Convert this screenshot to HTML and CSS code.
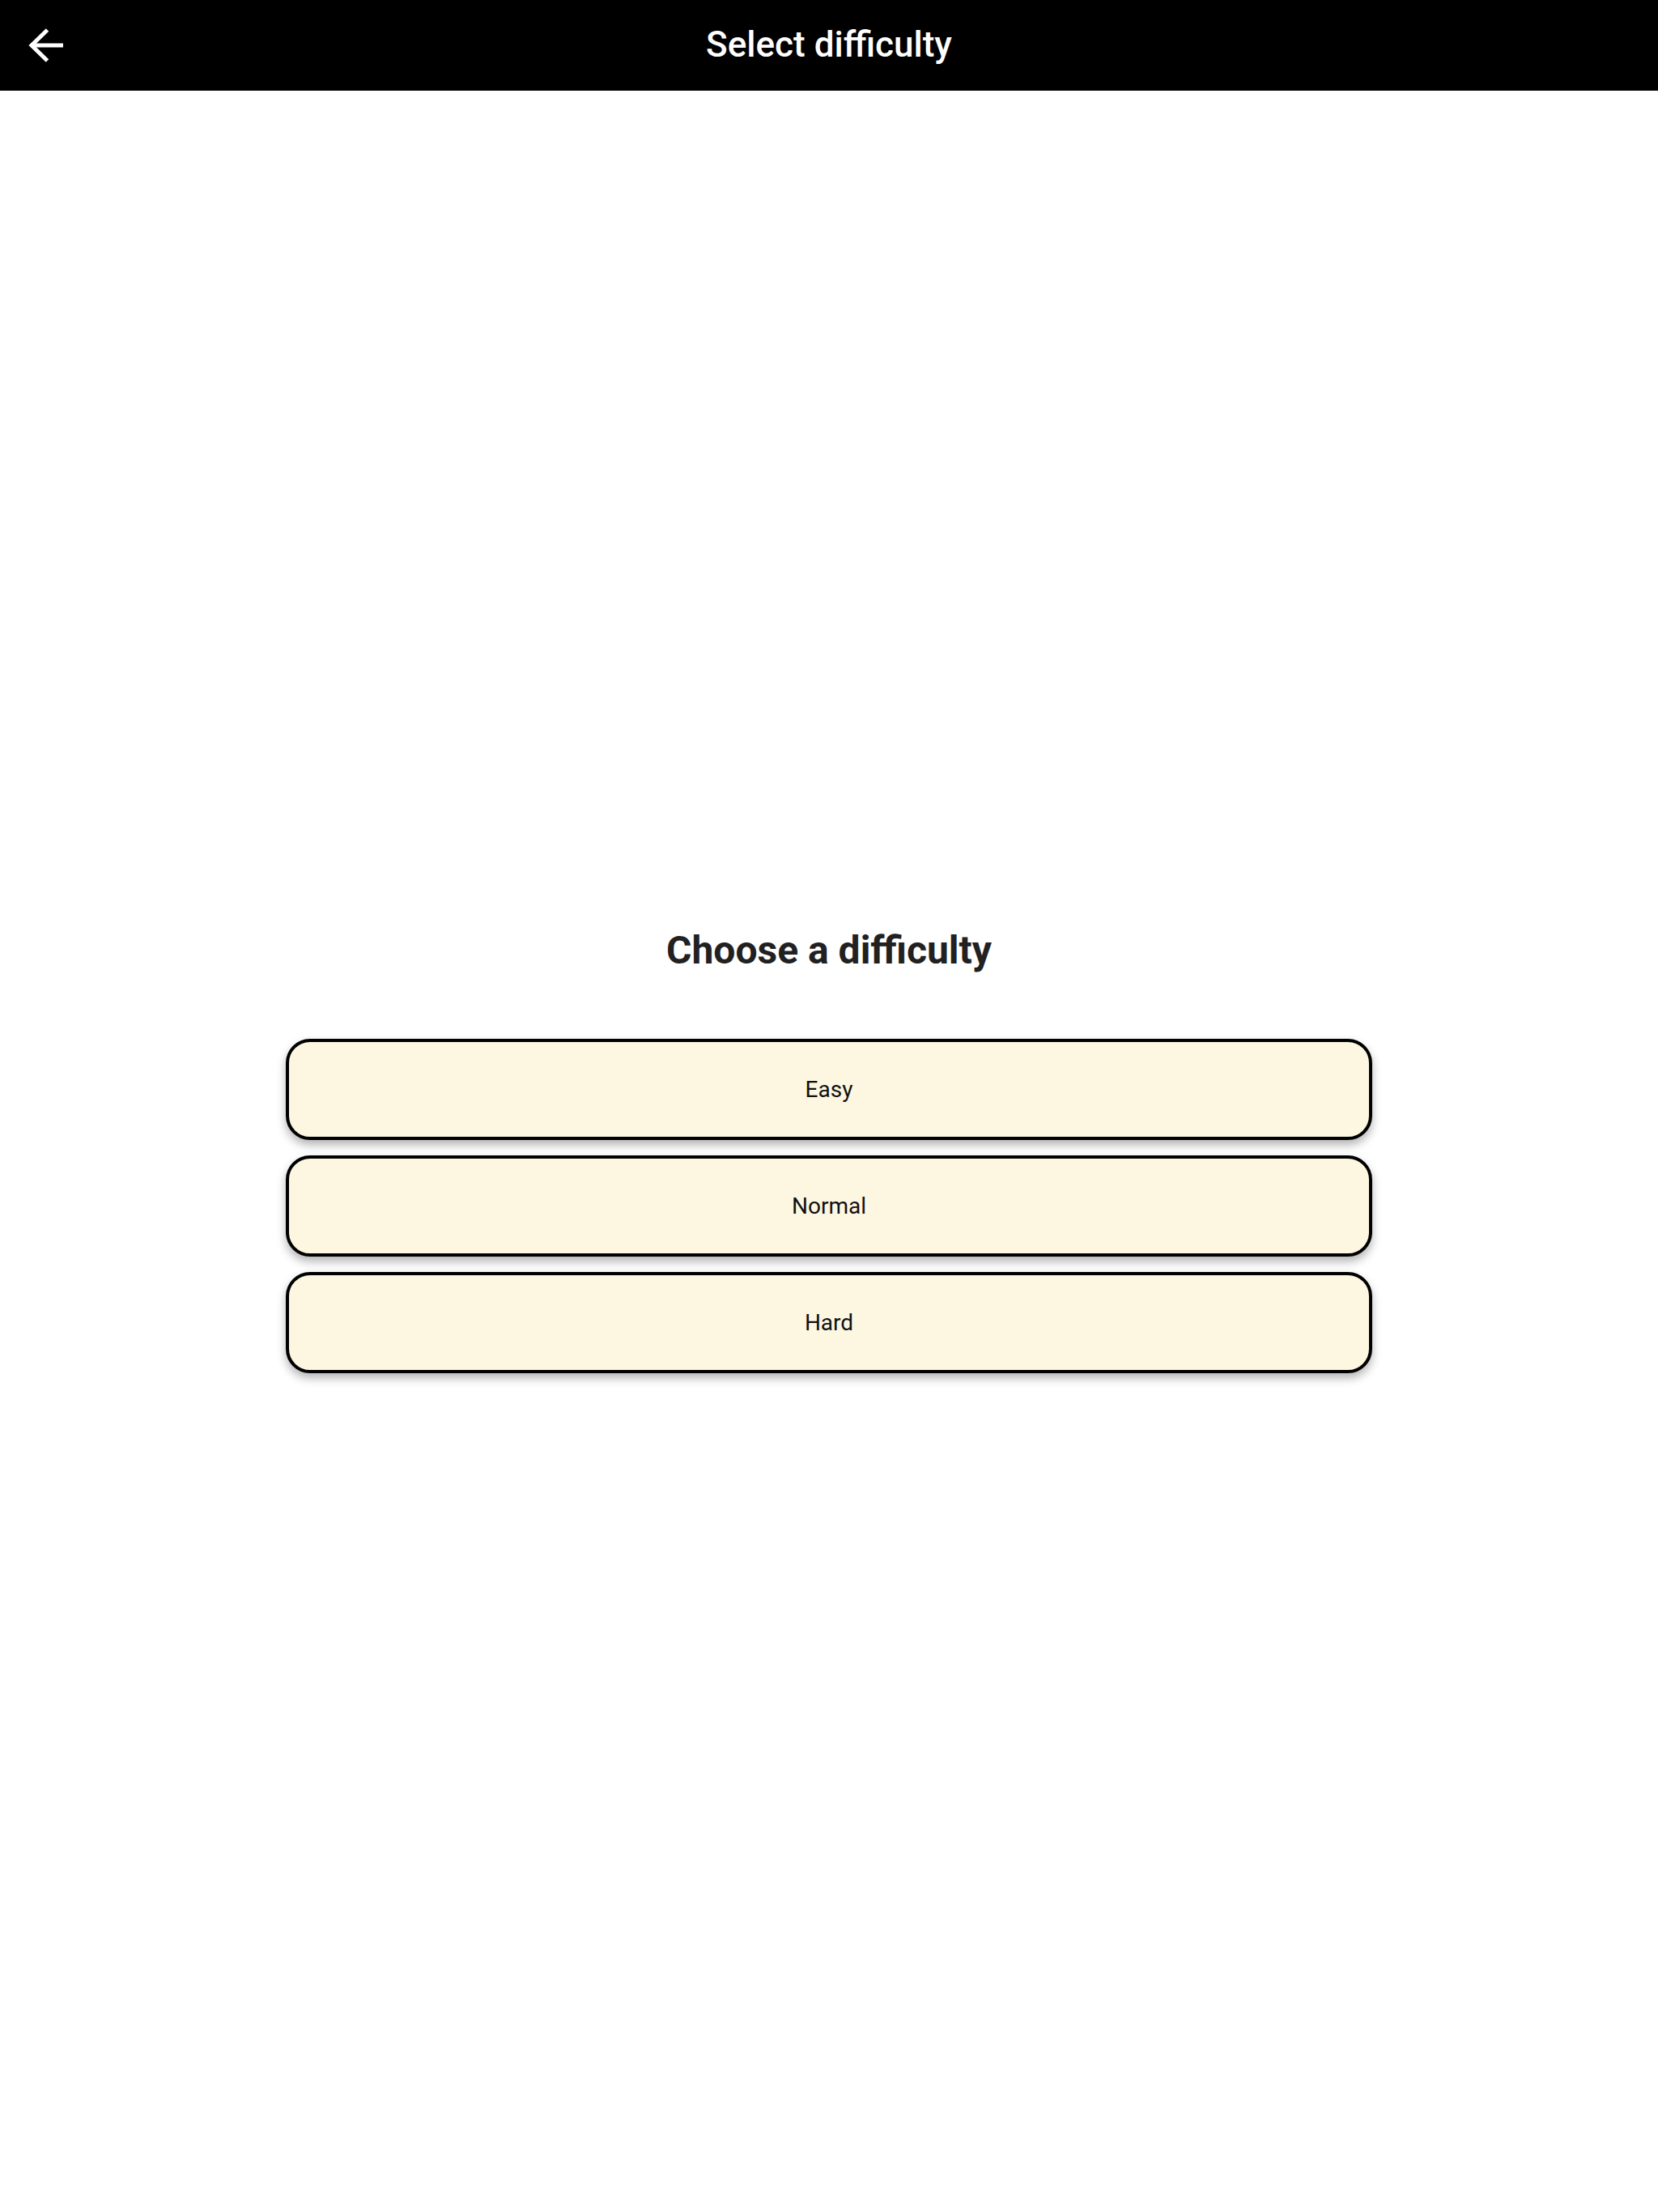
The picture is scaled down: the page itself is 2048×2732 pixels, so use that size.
FILE: index.html
```html
<!DOCTYPE html>
<html lang="en">
<head>
<meta charset="utf-8">
<title>Select difficulty</title>
<link rel="stylesheet" href="styles.css">
</head>
<body>
<div class="app">
  <header class="toolbar">
    <div class="toolbar-left">
      <button class="back" aria-label="Back">
        <svg class="back-icon" width="48" height="48" viewBox="0 0 48 48">
          <path d="M26.5 5 L7 24 L26.5 43" fill="none" stroke="#fff" stroke-width="5" stroke-linejoin="miter"/>
          <path d="M6 24 H46" fill="none" stroke="#fff" stroke-width="5"/>
        </svg>
      </button>
    </div>
    <h1 class="toolbar-title">Select difficulty</h1>
    <div class="toolbar-right"></div>
  </header>
  <main class="content">
    <div class="panel">
      <h2 class="heading">Choose a difficulty</h2>
      <div class="options">
        <button class="option">Easy</button>
        <button class="option">Normal</button>
        <button class="option">Hard</button>
      </div>
    </div>
  </main>
</div>
</body>
</html>
```

FILE: styles.css
```css
html, body {
  margin: 0;
  padding: 0;
  background: #ffffff;
}

body {
  font-family: Roboto, "Liberation Sans", sans-serif;
}

.app {
  display: flex;
  flex-direction: column;
  min-height: 2732px;
}

.toolbar {
  height: 112px;
  background: #000000;
  display: grid;
  grid-template-columns: 1fr auto 1fr;
  align-items: center;
  flex-shrink: 0;
}

.toolbar-left {
  display: flex;
  align-items: center;
  padding-left: 32px;
}

.back {
  background: none;
  border: 0;
  padding: 0;
  margin: 0;
  width: 48px;
  height: 48px;
  display: block;
  cursor: pointer;
}

.back-icon {
  display: block;
}

.toolbar-title {
  margin: 0;
  color: #ffffff;
  font-size: 44px;
  font-weight: 500;
  line-height: 1;
  letter-spacing: 0;
  padding-bottom: 2px;
}

.content {
  flex: 1;
  display: flex;
  align-items: center;
  justify-content: center;
  padding-bottom: 3px;
}

.panel {
  width: 1342px;
  display: flex;
  flex-direction: column;
  align-items: center;
}

.heading {
  margin: 0 0 81px 0;
  font-size: 48px;
  font-weight: 700;
  color: #212121;
  line-height: normal;
}

.options {
  width: 100%;
  display: flex;
  flex-direction: column;
  gap: 19px;
}

.option {
  box-sizing: border-box;
  width: 100%;
  height: 125px;
  background: #fdf7e1;
  border: 4px solid #000000;
  border-radius: 30px;
  box-shadow: 0 6px 12px rgba(0, 0, 0, 0.3);
  font-family: Roboto, "Liberation Sans", sans-serif;
  font-size: 28px;
  font-weight: 400;
  color: #111111;
  padding: 0;
  cursor: pointer;
}
```
